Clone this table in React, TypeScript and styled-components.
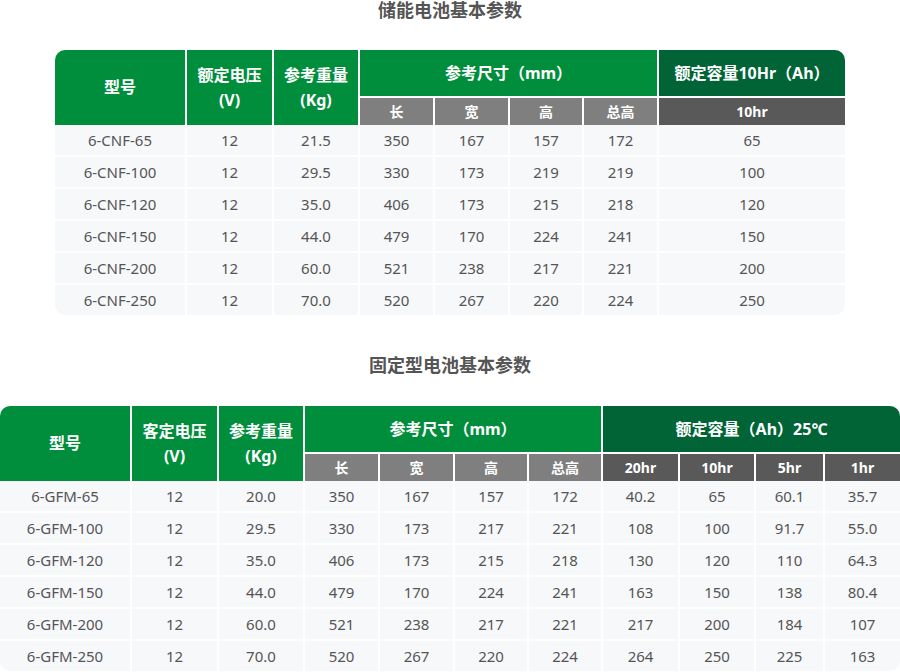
import React from "react";
import styled, { createGlobalStyle } from "styled-components";

const GlobalStyle = createGlobalStyle`
  html, body {
    margin: 0;
    padding: 0;
    background: #ffffff;
  }
  body {
    font-family: "Noto Sans", "Noto Sans CJK SC", sans-serif;
    color: #555555;
  }
  * { box-sizing: border-box; }
`;

const Page = styled.div`
  display: flex;
  flex-direction: column;
  align-items: center;
`;

const Title = styled.h2<{ $gap: number }>`
  margin: ${(p) => p.$gap}px 0 0;
  height: 20px;
  line-height: 20px;
  font-size: 18px;
  font-weight: 700;
  color: #555555;
  text-align: center;
`;

const TableFrame = styled.div<{ $width: number; $gap: number }>`
  width: ${(p) => p.$width}px;
  margin-top: ${(p) => p.$gap}px;
  border-radius: 10px;
  overflow: hidden;
`;

const Table = styled.table`
  width: 100%;
  table-layout: fixed;
  border-collapse: separate;
  border-spacing: 0;
`;

type Tone = "green" | "darkGreen" | "gray" | "darkGray";

const toneColor: Record<Tone, string> = {
  green: "#008e3c",
  darkGreen: "#006437",
  gray: "#7e7f7e",
  darkGray: "#595959",
};

const HeadCell = styled.th<{ $tone: Tone; $first?: boolean; $sub?: boolean }>`
  padding: 0;
  background: ${(p) => toneColor[p.$tone]};
  color: #ffffff;
  font-weight: 700;
  font-size: ${(p) => (p.$sub ? 14 : 16)}px;
  line-height: 25px;
  text-align: center;
  vertical-align: middle;
  border-left: ${(p) => (p.$first ? "none" : "2px solid #ffffff")};
  border-top: ${(p) => (p.$sub ? "2px solid #ffffff" : "none")};
  height: ${(p) => (p.$sub ? 29 : 46)}px;
`;

const BodyRow = styled.tr<{ $first: boolean }>`
  & > td {
    border-top: ${(p) => (p.$first ? "none" : "2px solid #ffffff")};
    height: ${(p) => (p.$first ? 30 : 32)}px;
  }
`;

const Cell = styled.td<{ $first?: boolean }>`
  padding: 0;
  background: #f7f8fa;
  color: #555555;
  font-size: 15px;
  text-align: center;
  vertical-align: middle;
  line-height: 20px;
  border-left: ${(p) => (p.$first ? "none" : "2px solid #ffffff")};
`;

interface SpecTableProps {
  width: number;
  gap: number;
  widths: number[];
  voltageLabel: string;
  capacityTitle: string;
  capacityCols: string[];
  rows: string[][];
}

const SpecTable: React.FC<SpecTableProps> = ({
  width,
  gap,
  widths,
  voltageLabel,
  capacityTitle,
  capacityCols,
  rows,
}) => (
  <TableFrame $width={width} $gap={gap}>
    <Table>
      <colgroup>
        {widths.map((w, i) => (
          <col key={i} style={{ width: w }} />
        ))}
      </colgroup>
      <thead>
        <tr>
          <HeadCell $tone="green" $first rowSpan={2}>
            型号
          </HeadCell>
          <HeadCell $tone="green" rowSpan={2}>
            {voltageLabel}
            <br />
            (V)
          </HeadCell>
          <HeadCell $tone="green" rowSpan={2}>
            参考重量
            <br />
            (Kg)
          </HeadCell>
          <HeadCell $tone="green" colSpan={4}>
            参考尺寸（mm）
          </HeadCell>
          <HeadCell $tone="darkGreen" colSpan={capacityCols.length}>
            {capacityTitle}
          </HeadCell>
        </tr>
        <tr>
          {["长", "宽", "高", "总高"].map((t) => (
            <HeadCell key={t} $tone="gray" $sub>
              {t}
            </HeadCell>
          ))}
          {capacityCols.map((t) => (
            <HeadCell key={t} $tone="darkGray" $sub>
              {t}
            </HeadCell>
          ))}
        </tr>
      </thead>
      <tbody>
        {rows.map((r, i) => (
          <BodyRow key={r[0]} $first={i === 0}>
            {r.map((v, j) => (
              <Cell key={j} $first={j === 0}>
                {v}
              </Cell>
            ))}
          </BodyRow>
        ))}
      </tbody>
    </Table>
  </TableFrame>
);

const storageRows: string[][] = [
  ["6-CNF-65", "12", "21.5", "350", "167", "157", "172", "65"],
  ["6-CNF-100", "12", "29.5", "330", "173", "219", "219", "100"],
  ["6-CNF-120", "12", "35.0", "406", "173", "215", "218", "120"],
  ["6-CNF-150", "12", "44.0", "479", "170", "224", "241", "150"],
  ["6-CNF-200", "12", "60.0", "521", "238", "217", "221", "200"],
  ["6-CNF-250", "12", "70.0", "520", "267", "220", "224", "250"],
];

const fixedRows: string[][] = [
  ["6-GFM-65", "12", "20.0", "350", "167", "157", "172", "40.2", "65", "60.1", "35.7"],
  ["6-GFM-100", "12", "29.5", "330", "173", "217", "221", "108", "100", "91.7", "55.0"],
  ["6-GFM-120", "12", "35.0", "406", "173", "215", "218", "130", "120", "110", "64.3"],
  ["6-GFM-150", "12", "44.0", "479", "170", "224", "241", "163", "150", "138", "80.4"],
  ["6-GFM-200", "12", "60.0", "521", "238", "217", "221", "217", "200", "184", "107"],
  ["6-GFM-250", "12", "70.0", "520", "267", "220", "224", "264", "250", "225", "163"],
];

export default function App() {
  return (
    <Page>
      <GlobalStyle />
      <Title $gap={0}>储能电池基本参数</Title>
      <SpecTable
        width={790}
        gap={30}
        widths={[130, 87, 86, 75, 75, 74, 75, 188]}
        voltageLabel="额定电压"
        capacityTitle="额定容量10Hr（Ah）"
        capacityCols={["10hr"]}
        rows={storageRows}
      />
      <Title $gap={40}>固定型电池基本参数</Title>
      <SpecTable
        width={900}
        gap={31}
        widths={[130, 87, 86, 75, 75, 74, 74, 77, 76, 69, 77]}
        voltageLabel="客定电压"
        capacityTitle="额定容量（Ah）25℃"
        capacityCols={["20hr", "10hr", "5hr", "1hr"]}
        rows={fixedRows}
      />
    </Page>
  );
}
